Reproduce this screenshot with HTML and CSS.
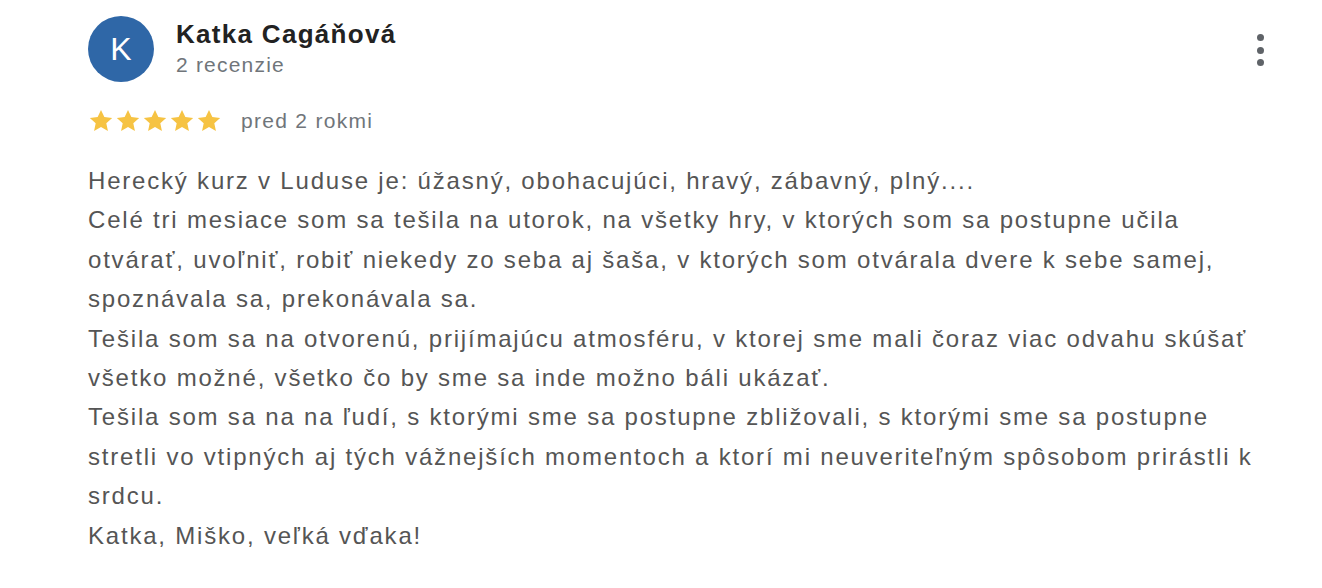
FILE: index.html
```html
<!DOCTYPE html>
<html lang="sk">
<head>
<meta charset="utf-8">
<link rel="stylesheet" href="styles.css">
</head>
<body>
<div class="review">
  <div class="header">
    <div class="avatar">K</div>
    <div class="who">
      <div class="name">Katka Cagáňová</div>
      <div class="count">2 recenzie</div>
    </div>
    <div class="menu" aria-label="menu">
      <span></span><span></span><span></span>
    </div>
  </div>
  <div class="rating">
    <div class="stars">
      <svg viewBox="0 0 24 24" class="star"><path d="M12 1.8l3.1 6.6 7.2.8-5.4 4.9 1.5 7.1L12 17.6l-6.4 3.6 1.5-7.1-5.4-4.9 7.2-.8z"/></svg>
      <svg viewBox="0 0 24 24" class="star"><path d="M12 1.8l3.1 6.6 7.2.8-5.4 4.9 1.5 7.1L12 17.6l-6.4 3.6 1.5-7.1-5.4-4.9 7.2-.8z"/></svg>
      <svg viewBox="0 0 24 24" class="star"><path d="M12 1.8l3.1 6.6 7.2.8-5.4 4.9 1.5 7.1L12 17.6l-6.4 3.6 1.5-7.1-5.4-4.9 7.2-.8z"/></svg>
      <svg viewBox="0 0 24 24" class="star"><path d="M12 1.8l3.1 6.6 7.2.8-5.4 4.9 1.5 7.1L12 17.6l-6.4 3.6 1.5-7.1-5.4-4.9 7.2-.8z"/></svg>
      <svg viewBox="0 0 24 24" class="star"><path d="M12 1.8l3.1 6.6 7.2.8-5.4 4.9 1.5 7.1L12 17.6l-6.4 3.6 1.5-7.1-5.4-4.9 7.2-.8z"/></svg>
    </div>
    <span class="date">pred 2 rokmi</span>
  </div>
  <div class="text">Herecký kurz v Luduse je: úžasný, obohacujúci, hravý, zábavný, plný....<br>Celé tri mesiace som sa tešila na utorok, na všetky hry, v ktorých som sa postupne učila otvárať, uvoľniť, robiť niekedy zo seba aj šaša, v ktorých som otvárala dvere k sebe samej, spoznávala sa, prekonávala sa.<br>Tešila som sa na otvorenú, prijímajúcu atmosféru, v ktorej sme mali čoraz viac odvahu skúšať všetko možné, všetko čo by sme sa inde možno báli ukázať.<br>Tešila som sa na na ľudí, s ktorými sme sa postupne zbližovali, s ktorými sme sa postupne stretli vo vtipných aj tých vážnejších momentoch a ktorí mi neuveriteľným spôsobom prirástli k srdcu.<br>Katka, Miško, veľká vďaka!</div>
</div>
</body>
</html>
```
FILE: styles.css
```css
html, body {
  margin: 0;
  padding: 0;
  background: #ffffff;
}
body {
  font-family: "Liberation Sans", Arial, sans-serif;
}
.review {
  padding: 16px 58px 0 88px;
}
.header {
  display: flex;
  align-items: flex-start;
}
.avatar {
  width: 66px;
  height: 66px;
  border-radius: 50%;
  background: #2f67a7;
  color: #ffffff;
  font-size: 32px;
  line-height: 66px;
  text-align: center;
  flex: none;
}
.who {
  margin-left: 22px;
  padding-top: 2px;
  flex: 1;
}
.name {
  font-weight: bold;
  font-size: 26px;
  line-height: 32px;
  letter-spacing: 1.3px;
  color: #222222;
}
.count {
  font-size: 21px;
  line-height: 30px;
  letter-spacing: 1.2px;
  color: #70757a;
}
.menu {
  display: flex;
  flex-direction: column;
  gap: 5.5px;
  padding-top: 18px;
  flex: none;
}
.menu span {
  width: 7px;
  height: 7px;
  border-radius: 50%;
  background: #5f6368;
}
.rating {
  display: flex;
  align-items: center;
  margin-top: 25px;
  height: 28px;
}
.stars {
  display: flex;
  gap: 1px;
}
.star {
  width: 26px;
  height: 26px;
  fill: #f6c343;
}
.date {
  margin-left: 19px;
  font-size: 21px;
  letter-spacing: 1.3px;
  color: #70757a;
}
.text {
  margin-top: 26px;
  font-size: 24px;
  line-height: 39.4px;
  letter-spacing: 1.8px;
  color: #555555;
}
```
